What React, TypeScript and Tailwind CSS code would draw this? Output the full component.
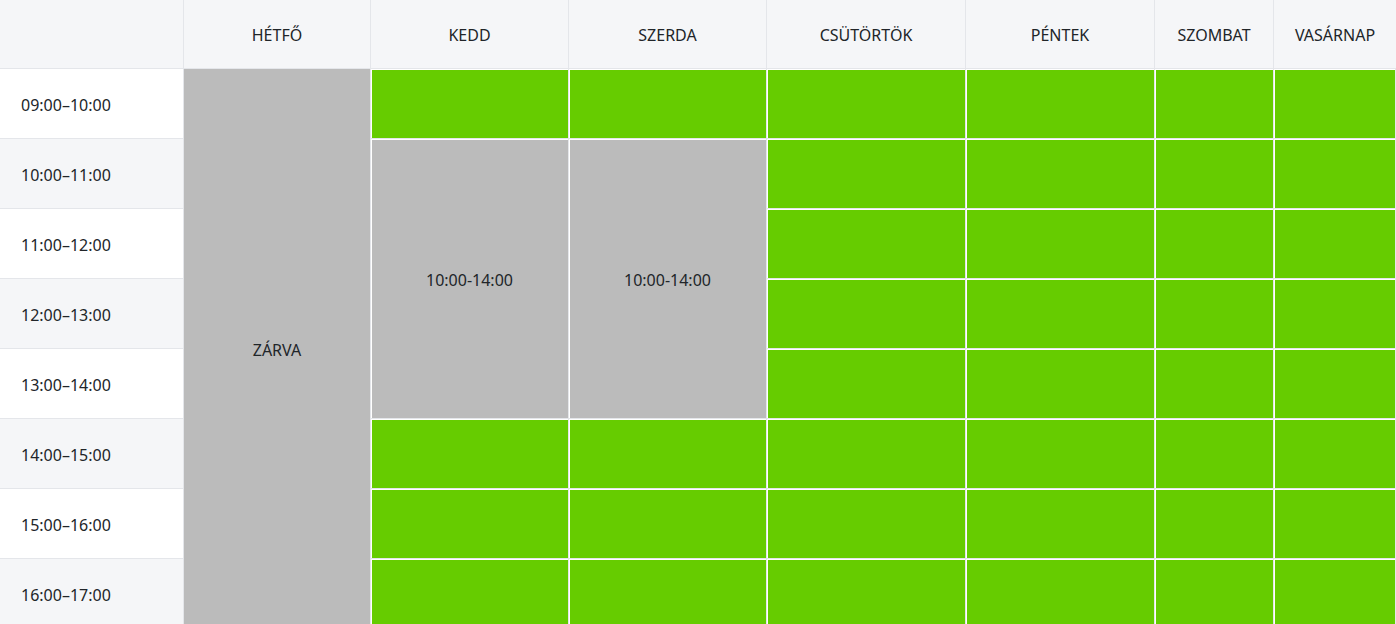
import React from "react";

const days = ["HÉTFŐ", "KEDD", "SZERDA", "CSÜTÖRTÖK", "PÉNTEK", "SZOMBAT", "VASÁRNAP"];
const times = [
  "09:00–10:00",
  "10:00–11:00",
  "11:00–12:00",
  "12:00–13:00",
  "13:00–14:00",
  "14:00–15:00",
  "15:00–16:00",
  "16:00–17:00",
];

const green = "bg-[#66cc00] border-r border-b border-[#e4e6ea] shadow-[inset_1px_1px_0_#ffffff]";
const gray = "bg-[#bbbbbb] border-r border-b border-[#e4e6ea] shadow-[inset_1px_1px_0_#ffffff] flex items-center justify-center pt-[2px]";

export default function App() {
  const cells: React.ReactNode[] = [];
  cells.push(<div key="h0" className="bg-[#f5f6f8] border-r border-b border-[#e4e6ea]" />);
  days.forEach((d, i) => {
    cells.push(
      <div
        key={"h" + d}
        className={`bg-[#f5f6f8] border-b border-[#e4e6ea] flex items-center justify-center pt-[2px] ${i < days.length - 1 ? "border-r" : ""}`}
      >
        {d}
      </div>
    );
  });

  times.forEach((t, r) => {
    cells.push(
      <div
        key={"t" + r}
        className={`${r % 2 === 0 ? "bg-white" : "bg-[#f5f6f8]"} border-r border-b border-[#e4e6ea] flex items-center pl-[21px] pt-[2px]`}
      >
        {t}
      </div>
    );
    if (r === 0) {
      cells.push(
        <div
          key="zarva"
          className="bg-[#bbbbbb] border-r border-b border-[#e4e6ea] flex items-center justify-center pt-[2px] row-span-8"
        >
          ZÁRVA
        </div>
      );
    }
    if (r === 1) {
      cells.push(
        <div key="kedd" className={`${gray} row-span-4`}>
          10:00-14:00
        </div>
      );
      cells.push(
        <div key="szerda" className={`${gray} row-span-4`}>
          10:00-14:00
        </div>
      );
    } else if (r === 0 || r >= 5) {
      cells.push(<div key={"k" + r} className={green} />);
      cells.push(<div key={"s" + r} className={green} />);
    }
    for (let c = 0; c < 4; c++) {
      cells.push(<div key={"g" + r + "-" + c} className={green} />);
    }
  });

  return (
    <div
      className="h-[624px] w-[1396px] overflow-hidden bg-white text-[16px] text-[#212529]"
      style={{ fontFamily: '"Noto Sans", "Open Sans", sans-serif' }}
    >
      <div className="grid grid-cols-[184px_187px_198px_198px_199px_189px_119px_122px] grid-rows-[69px_repeat(8,70px)]">
        {cells}
      </div>
    </div>
  );
}
